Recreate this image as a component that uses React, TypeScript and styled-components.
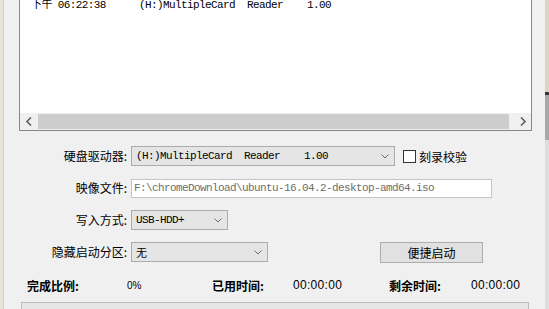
import React from "react";
import styled, { createGlobalStyle } from "styled-components";

const GlobalStyle = createGlobalStyle`
  html, body {
    margin: 0;
    padding: 0;
    background: #f0f0f0;
    overflow: hidden;
  }
`;

const cjk = `"Noto Sans CJK SC", "Liberation Sans", sans-serif`;
const mono = `"Liberation Mono", "Noto Sans CJK SC", monospace`;

const Frame = styled.div`
  display: flex;
  width: 549px;
  height: 309px;
  overflow: hidden;
  background: #f0f0f0;
  font-family: ${cjk};
  font-size: 12px;
  color: #000;
`;

const LeftEdge = styled.div`
  width: 3px;
  background: #e6e3d6;
  border-right: 1px solid #d6d3c6;
`;

const RightEdge = styled.div`
  width: 4px;
  display: flex;
  flex-direction: column;
`;

const EdgePiece = styled.div<{ $h?: number; $c: string }>`
  height: ${(p) => (p.$h ? `${p.$h}px` : "auto")};
  flex: ${(p) => (p.$h ? "none" : "1")};
  background: ${(p) => p.$c};
`;

const Dialog = styled.div`
  flex: 1;
  display: flex;
  flex-direction: column;
  & > * {
    flex-shrink: 0;
  }
`;

const ListBox = styled.div`
  box-sizing: border-box;
  margin-left: 15px;
  width: 513px;
  height: 131px;
  border: 1px solid #828790;
  border-top: none;
  background: #fff;
  display: flex;
  flex-direction: column;
`;

const ListBody = styled.div`
  flex: 1;
  overflow: hidden;
`;

const ListRow = styled.div`
  display: grid;
  grid-template-columns: 119px auto;
  margin-top: -3px;
  height: 16px;
  line-height: 16px;
  font-family: ${mono};
  font-size: 11px;
  letter-spacing: -0.6px;
  white-space: pre;
`;

const TimeCell = styled.div`
  padding-left: 11px;
`;

const HScroll = styled.div`
  height: 17px;
  flex-shrink: 0;
  display: flex;
  align-items: center;
  background: #f0f0f0;
`;

const ScrollArrow = styled.div`
  width: 17px;
  height: 17px;
  display: flex;
  align-items: center;
  justify-content: center;
`;

const Thumb = styled.div`
  width: 471px;
  height: 15px;
  margin-left: 1px;
  background: #cdcdcd;
`;

const Track = styled.div`
  flex: 1;
`;

const Form = styled.div`
  display: grid;
  grid-template-columns: 123px 1fr;
  column-gap: 4px;
  row-gap: 12px;
  grid-auto-rows: 20px;
  align-items: center;
  margin-top: 15px;
`;

const Label = styled.div`
  text-align: right;
  font-size: 12px;
  line-height: 20px;
  white-space: nowrap;
`;

const Cell = styled.div`
  display: flex;
  align-items: center;
  height: 20px;
`;

const Select = styled.div<{ $w: number }>`
  box-sizing: border-box;
  width: ${(p) => p.$w}px;
  height: 20px;
  border: 1px solid #acacac;
  background: #e5e5e5;
  display: flex;
  align-items: center;
  justify-content: space-between;
  padding: 0 5px 0 4px;
  font-family: ${mono};
  font-size: 11px;
  letter-spacing: -0.6px;
  white-space: pre;
`;

const Input = styled.div`
  box-sizing: border-box;
  width: 361px;
  height: 19px;
  border: 1px solid #c4c4c4;
  background: #fff;
  padding-left: 2px;
  display: flex;
  align-items: center;
  font-family: ${mono};
  font-size: 11px;
  letter-spacing: -0.6px;
  color: #6d6d6d;
  white-space: pre;
`;

const CheckBox = styled.div`
  box-sizing: border-box;
  width: 13px;
  height: 13px;
  margin-left: 8px;
  border: 1px solid #333;
  background: #fff;
`;

const CheckLabel = styled.span`
  margin-left: 3px;
  font-size: 12px;
`;

const Button = styled.div`
  box-sizing: border-box;
  width: 103px;
  height: 21px;
  margin-left: 112px;
  border: 1px solid #adadad;
  background: #e1e1e1;
  display: flex;
  align-items: center;
  justify-content: center;
  font-size: 12px;
`;

const Stats = styled.div`
  display: grid;
  grid-template-columns: 100px 85px 81px 96px 82px 1fr;
  align-items: center;
  height: 20px;
  margin-top: 13px;
  padding-left: 23px;
  white-space: nowrap;
`;

const StatLabel = styled.span`
  font-size: 12px;
  font-weight: bold;
`;

const StatValue = styled.span<{ $small?: boolean }>`
  font-family: "Liberation Sans", sans-serif;
  font-size: ${(p) => (p.$small ? 10 : 12)}px;
  letter-spacing: ${(p) => (p.$small ? 0 : 0.3)}px;
`;

const Progress = styled.div`
  box-sizing: border-box;
  margin: 7px 0 0 17px;
  width: 508px;
  height: 20px;
  border: 1px solid #bcbcbc;
  background: #e6e6e6;
`;

const Chevron = () => (
  <svg width="8" height="5" viewBox="0 0 8 5">
    <polyline points="0.5,0.5 4,4 7.5,0.5" fill="none" stroke="#6a6a6a" strokeWidth="1" />
  </svg>
);

const Arrow = ({ dir }: { dir: "left" | "right" }) => (
  <svg width="6" height="9" viewBox="0 0 6 9">
    <polyline
      points={dir === "left" ? "5,0.5 1,4.5 5,8.5" : "1,0.5 5,4.5 1,8.5"}
      fill="none"
      stroke="#606060"
      strokeWidth="1.6"
    />
  </svg>
);

export default function App() {
  return (
    <>
      <GlobalStyle />
      <Frame>
        <LeftEdge />
        <Dialog>
          <ListBox>
            <ListBody>
              <ListRow>
                <TimeCell>下午 06:22:38</TimeCell>
                <div>(H:)MultipleCard  Reader    1.00</div>
              </ListRow>
            </ListBody>
            <HScroll>
              <ScrollArrow>
                <Arrow dir="left" />
              </ScrollArrow>
              <Thumb />
              <Track />
              <ScrollArrow>
                <Arrow dir="right" />
              </ScrollArrow>
            </HScroll>
          </ListBox>

          <Form>
            <Label>硬盘驱动器:</Label>
            <Cell>
              <Select $w={264}>
                <span>(H:)MultipleCard  Reader    1.00</span>
                <Chevron />
              </Select>
              <CheckBox />
              <CheckLabel>刻录校验</CheckLabel>
            </Cell>

            <Label>映像文件:</Label>
            <Cell>
              <Input>F:\chromeDownload\ubuntu-16.04.2-desktop-amd64.iso</Input>
            </Cell>

            <Label>写入方式:</Label>
            <Cell>
              <Select $w={97}>
                <span>USB-HDD+</span>
                <Chevron />
              </Select>
            </Cell>

            <Label>隐藏启动分区:</Label>
            <Cell>
              <Select $w={137}>
                <span>无</span>
                <Chevron />
              </Select>
              <Button>便捷启动</Button>
            </Cell>
          </Form>

          <Stats>
            <StatLabel>完成比例:</StatLabel>
            <StatValue $small>0%</StatValue>
            <StatLabel>已用时间:</StatLabel>
            <StatValue>00:00:00</StatValue>
            <StatLabel>剩余时间:</StatLabel>
            <StatValue>00:00:00</StatValue>
          </Stats>

          <Progress />
        </Dialog>
        <RightEdge>
          <EdgePiece $h={92} $c="#d9d6c1" />
          <EdgePiece $h={3} $c="#333" />
          <EdgePiece $h={45} $c="#a8a8a8" />
          <EdgePiece $c="#dedede" />
        </RightEdge>
      </Frame>
    </>
  );
}
